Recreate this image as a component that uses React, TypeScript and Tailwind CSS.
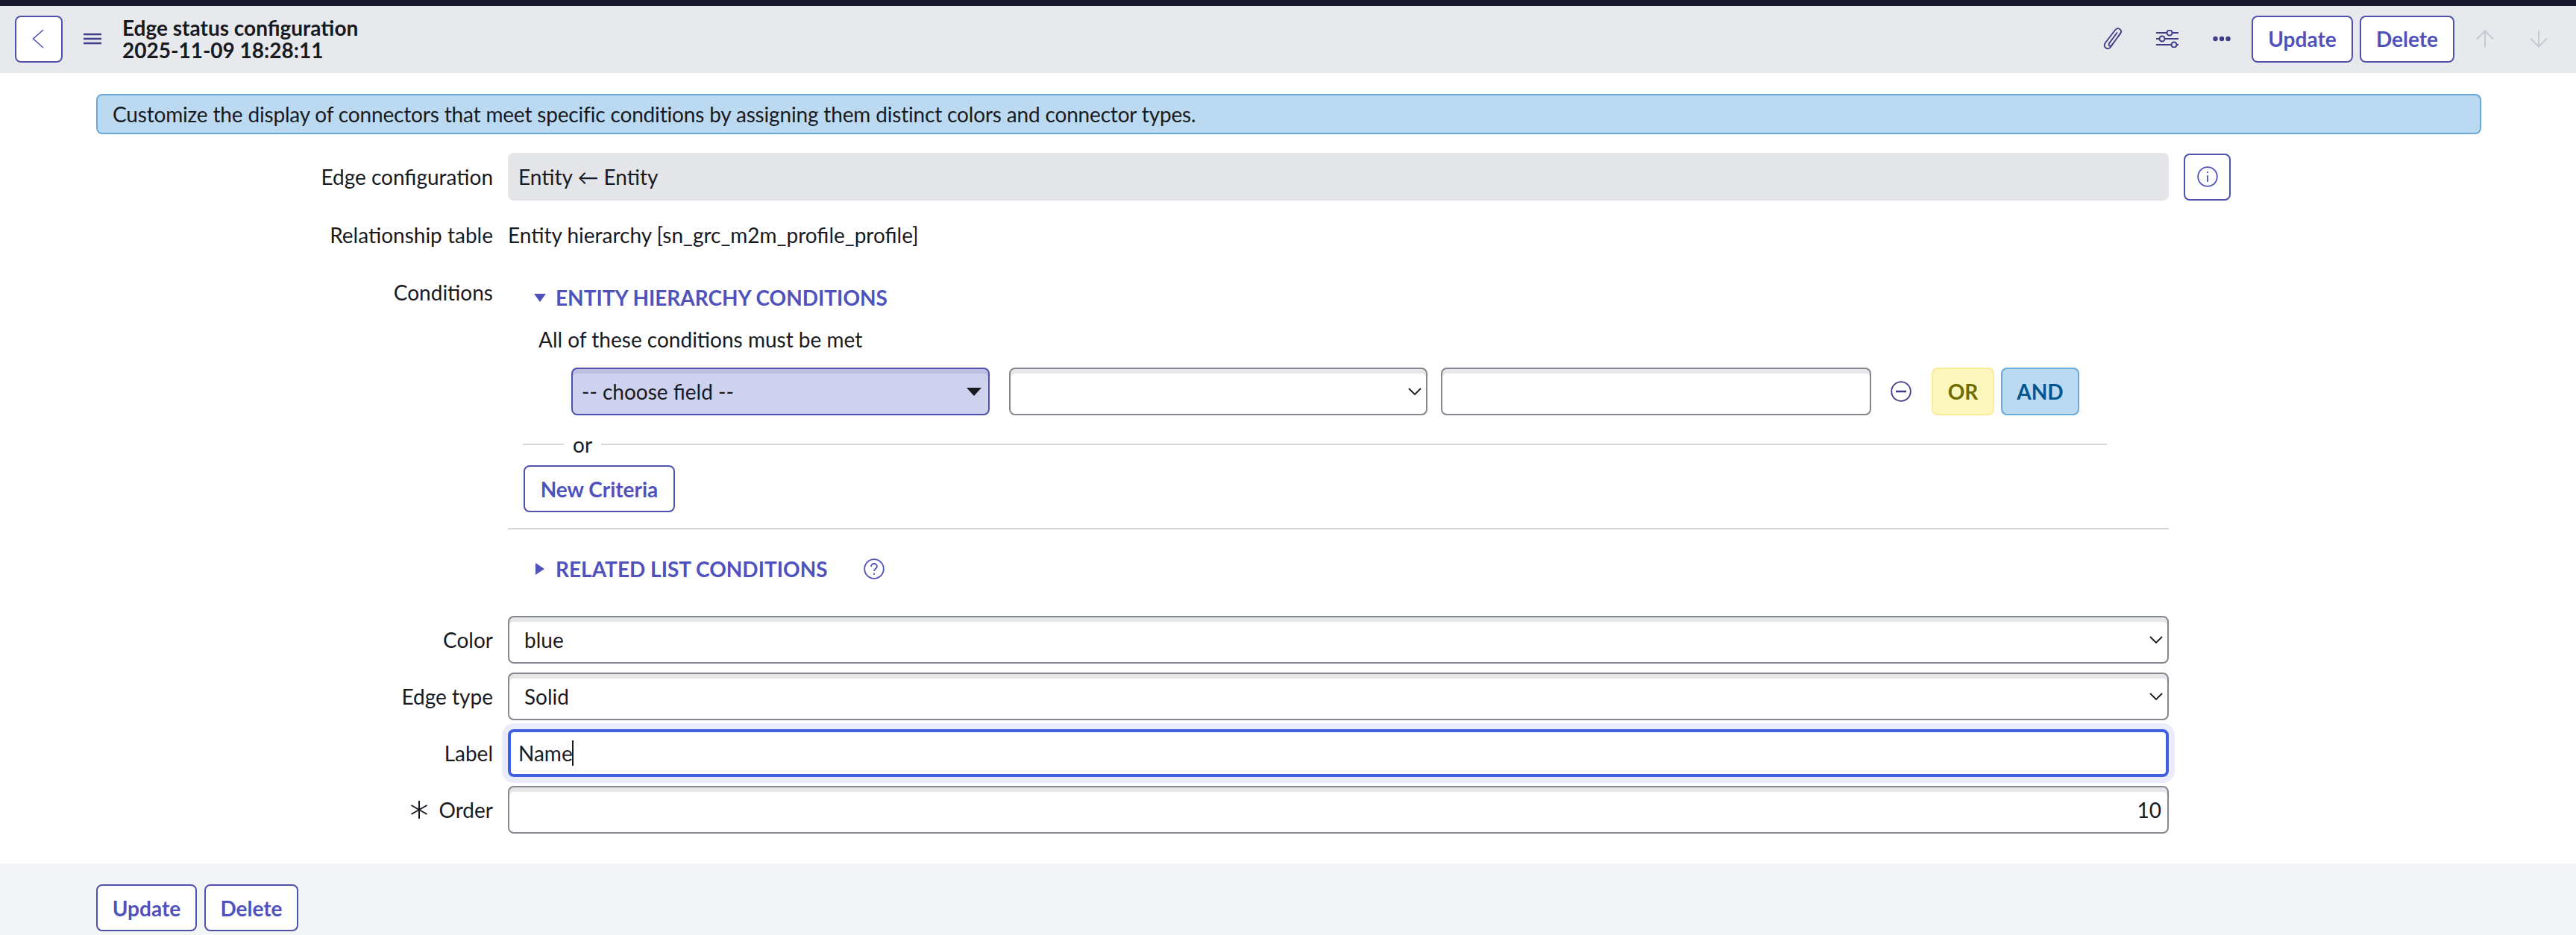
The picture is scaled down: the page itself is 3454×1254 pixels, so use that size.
import { ArrowUp, ArrowDown } from "lucide-react";

const btn =
  "h-[63px] rounded-lg border-2 border-[#4f52ad] bg-white text-[28px] font-bold text-[#4f52bd] flex items-center justify-center";
const field =
  "h-[64px] rounded-lg border-2 border-[#85878f] bg-white shadow-[inset_0_6px_0_#e6e7e8] text-[28px] text-[#181a1f] outline-none appearance-none";

function Row({ label, required, children }: { label: string; required?: boolean; children: React.ReactNode }) {
  return (
    <div className="flex items-center">
      <div className="w-[661px] flex items-center justify-end text-[28px] text-[#181a1f]">
        {required && (
          <svg width="26" height="26" viewBox="0 0 26 26" className="mr-[14px] text-[#181a1f]" fill="none" stroke="currentColor" strokeWidth="2">
            <path d="M13 1v24M2.5 7 23.5 19M23.5 7 2.5 19" />
          </svg>
        )}
        {label}
      </div>
      <div className="ml-5 w-[2227px] flex items-center">{children}</div>
    </div>
  );
}

function SelectField({ value }: { value: string }) {
  return (
    <div className="relative w-full">
      <select className={`${field} w-full pl-5 pr-10`} defaultValue={value}>
        <option>{value}</option>
      </select>
      <svg width="18" height="10" viewBox="0 0 18 10" className="absolute right-[8px] top-[27px] pointer-events-none" fill="none" stroke="#181a1f" strokeWidth="1.8">
        <path d="M1 1l8 8 8-8" />
      </svg>
    </div>
  );
}

export default function App() {
  return (
    <div className="h-screen flex flex-col bg-white font-['Lato','Noto_Sans',sans-serif] overflow-hidden">
      <div className="h-2 bg-[#181a2b]" />

      {/* header */}
      <div className="h-[90px] flex items-center bg-[#e7e9ed] pl-5 pr-[32px] pb-[2px]">
        <button className={`${btn} w-[64px]`}>
          <svg width="16" height="26" viewBox="0 0 16 26" fill="none" stroke="#4f52bd" strokeWidth="1.6" className="mr-[2px]">
            <path d="M15 1 1.5 13 15 25" />
          </svg>
        </button>
        <svg width="24" height="16" viewBox="0 0 24 16" className="ml-[28px]" stroke="#3f3d87" strokeWidth="2.5">
          <path d="M0 2h24M0 8h24M0 14h24" />
        </svg>
        <div className="ml-[28px] text-[28px] leading-[30px] font-bold text-[#181a1f]">
          <div>Edge status configuration</div>
          <div>2025-11-09 18:28:11</div>
        </div>

        <div className="ml-auto flex items-center">
          <svg width="28" height="30" viewBox="0 0 28 30" fill="none" stroke="#3f3d87" strokeWidth="1.8" strokeLinecap="round">
            <path d="M24.5 5.5 10.5 25.5c-2 2.8-5 3.3-7 1.8s-2.3-4.3-.5-7L15.5 4c2-2.7 4.8-3.3 6.7-2s2.6 3.7.8 6.3L11.5 23.5c-.9 1.2-2.3 1.4-3.2.8s-1-1.9-.2-3.2L18.5 7" />
          </svg>
          <svg width="30" height="24" viewBox="0 0 30 24" className="ml-[43px]" fill="none" stroke="#3f3d87" strokeWidth="2">
            <path d="M0 4h14M22 4h8M0 12h4M12 12h18M0 20h20M28 20h2" />
            <circle cx="18" cy="4" r="3.5" />
            <circle cx="8" cy="12" r="3.5" />
            <circle cx="24" cy="20" r="3.5" />
          </svg>
          <svg width="24" height="8" viewBox="0 0 24 8" className="ml-[46px]" fill="#3f3d87">
            <circle cx="3.5" cy="4" r="3.2" />
            <circle cx="12" cy="4" r="3.2" />
            <circle cx="20.5" cy="4" r="3.2" />
          </svg>
          <button className={`${btn} ml-7 w-[136px]`}>Update</button>
          <button className={`${btn} ml-[9px] w-[127px]`}>Delete</button>
          <ArrowUp size={36} strokeWidth={1.3} className="ml-[23px] text-[#c6c8d4]" />
          <ArrowDown size={36} strokeWidth={1.3} className="ml-[36px] text-[#c6c8d4]" />
        </div>
      </div>

      {/* form */}
      <div className="flex-1">
        <div className="mt-7 ml-[129px] w-[3198px] h-[54px] flex items-center rounded-lg border-2 border-[#6aaad8] bg-[#bbdaf1] pl-5 text-[28px] tracking-[-0.17px] text-[#181a1f]">
          Customize the display of connectors that meet specific conditions by assigning them distinct colors and connector types.
        </div>

        <div className="mt-[25px]">
          <Row label="Edge configuration">
            <div className="w-[2227px] shrink-0 h-[64px] flex items-center rounded-lg bg-[#e4e5e9] pl-[14px] text-[28px] text-[#181a1f]">
              Entity ← Entity
            </div>
            <button className="ml-5 w-[63px] h-[63px] shrink-0 flex items-center justify-center rounded-lg border-2 border-[#4f52ad] bg-white">
              <svg width="28" height="28" viewBox="0 0 28 28" fill="none" stroke="#4f52bd" strokeWidth="1.8">
                <circle cx="14" cy="14" r="12.8" />
                <path d="M14 12v9M14 7v2" />
              </svg>
            </button>
          </Row>
        </div>

        <div className="mt-6 h-11">
          <Row label="Relationship table">
            <div className="h-11 flex items-center text-[28px] text-[#181a1f]">Entity hierarchy [sn_grc_m2m_profile_profile]</div>
          </Row>
        </div>

        <div className="mt-[35px] flex">
          <div className="w-[661px] text-right text-[28px] leading-10 text-[#181a1f]">Conditions</div>
          <div className="ml-5 w-[2227px]">
            <div className="mt-[7px] h-10 flex items-center pl-[35px]">
              <svg width="16" height="11" viewBox="0 0 16 11" fill="#4f52bd"><path d="M0 0h16L8 11z" /></svg>
              <span className="ml-[13px] text-[28px] font-bold text-[#4f52bd]">ENTITY HIERARCHY CONDITIONS</span>
            </div>
            <div className="mt-4 h-10 flex items-center pl-[41px] text-[28px] text-[#181a1f]">All of these conditions must be met</div>

            <div className="mt-[18px] ml-[85px] flex items-center">
              <div className="relative w-[561px] shrink-0">
                <select className="w-full h-[64px] rounded-lg border-2 border-[#4f52ad] bg-[#cfd2ee] shadow-[inset_0_6px_0_#bcbfe0] pl-3 text-[28px] text-[#181a1f] outline-none appearance-none" defaultValue="-- choose field --">
                  <option>-- choose field --</option>
                </select>
                <svg width="20" height="11" viewBox="0 0 20 11" className="absolute right-[11px] top-[27px]" fill="#181a1f"><path d="M0 0h20L10 11z" /></svg>
              </div>
              <div className="ml-[26px] w-[561px] shrink-0"><SelectField value="" /></div>
              <input className={`${field} ml-[18px] w-[577px] shrink-0 px-3`} />
              <svg width="28" height="28" viewBox="0 0 28 28" className="ml-[26px] shrink-0" fill="none" stroke="#3f3d87" strokeWidth="1.8">
                <circle cx="14" cy="14" r="12.8" />
                <path d="M7 14h14" strokeWidth="2.5" />
              </svg>
              <button className="ml-[27px] w-[84px] h-[64px] shrink-0 rounded-lg border-2 border-[#f5ee96] bg-[#fdf6bd] text-[28px] font-bold text-[#6f6d00]">OR</button>
              <button className="ml-[9px] w-[105px] h-[64px] shrink-0 rounded-lg border-2 border-[#6aaad8] bg-[#bbdaf1] text-[28px] font-bold text-[#00568f]">AND</button>
            </div>

            <div className="mt-[23px] ml-5 w-[2124px] h-8 flex items-center text-[28px] text-[#181a1f]">
              <div className="w-[55px] h-[2px] bg-[#d5d5d5]" />
              <span className="mx-[12px]">or</span>
              <div className="flex-1 h-[2px] bg-[#d5d5d5]" />
            </div>

            <button className={`${btn} mt-3 ml-[21px] w-[203px]`}>New Criteria</button>

            <div className="mt-[21px] h-[2px] bg-[#d5d5d5]" />

            <div className="mt-[33px] h-10 flex items-center pl-[37px]">
              <svg width="12" height="16" viewBox="0 0 12 16" fill="#4f52bd"><path d="M0 0l12 8-12 8z" /></svg>
              <span className="ml-[15px] text-[28px] font-bold text-[#4f52bd]">RELATED LIST CONDITIONS</span>
              <svg width="28" height="28" viewBox="0 0 28 28" className="ml-[48px]" fill="none" stroke="#4f52bd" strokeWidth="1.8">
                <circle cx="14" cy="14" r="12.8" />
                <path d="M10 11c0-2.4 1.8-4 4-4s4 1.6 4 3.6c0 3.2-4 3.2-4 6.4M14 19.5v2.2" />
              </svg>
            </div>
          </div>
        </div>

        <div className="mt-[43px] flex flex-col gap-3">
          <Row label="Color"><SelectField value="blue" /></Row>
          <Row label="Edge type"><SelectField value="Solid" /></Row>
          <Row label="Label">
            <div className="w-full h-[64px] flex items-center rounded-lg border-[4px] border-[#3f5fdf] bg-white shadow-[0_0_0_8px_#eaecfb] pl-[10px] text-[28px] text-[#181a1f]">
              Name<span className="ml-[-1px] inline-block w-[2px] h-[34px] bg-[#181a1f]" />
            </div>
          </Row>
          <Row label="Order" required>
            <input className={`${field} w-full pr-2 text-right`} defaultValue="10" />
          </Row>
        </div>
      </div>

      {/* footer */}
      <div className="h-[96px] bg-[#f4f5f7] pt-7 pl-[129px] flex items-start">
        <button className={`${btn} w-[135px]`}>Update</button>
        <button className={`${btn} ml-[10px] w-[126px]`}>Delete</button>
      </div>
    </div>
  );
}
